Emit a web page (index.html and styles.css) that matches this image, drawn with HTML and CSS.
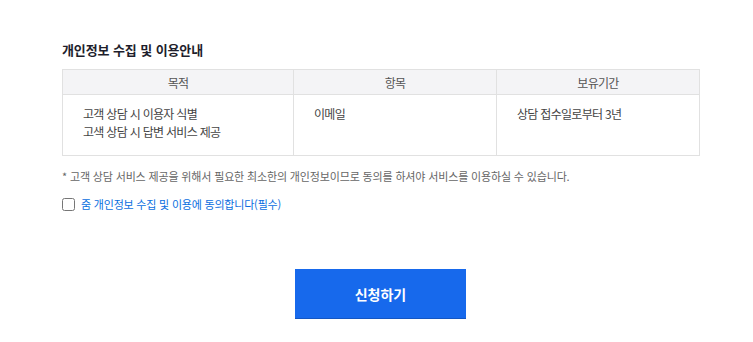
FILE: index.html
```html
<!DOCTYPE html>
<html lang="ko">
<head>
  <meta charset="UTF-8"/>
  <meta name="viewport" content="width=device-width, initial-scale=1.0"/>
  <title>개인정보 수집 및 이용안내</title>
  <link rel="stylesheet" href="styles.css">
</head>
<body>

<div class="container">

  <h3 class="title">개인정보 수집 및 이용안내</h3>

  <table class="privacy">
    <colgroup>
      <col class="col-purpose">
      <col class="col-item">
      <col class="col-period">
    </colgroup>
    <thead>
      <tr>
        <th>목적</th>
        <th>항목</th>
        <th>보유기간</th>
      </tr>
    </thead>
    <tbody>
      <tr>
        <td>고객 상담 시 이용자 식별<br>고색 상담 시 답변 서비스 제공</td>
        <td>이메일</td>
        <td>상담 접수일로부터 3년</td>
      </tr>
    </tbody>
  </table>

  <p class="note">* 고객 상담 서비스 제공을 위해서 필요한 최소한의 개인정보이므로 동의를 하셔야 서비스를 이용하실 수 있습니다.</p>

  <label class="agree">
    <input type="checkbox" id="agreeCheck">
    <span>줌 개인정보 수집 및 이용에 동의합니다(필수)</span>
  </label>

  <div class="actions">
    <button class="submit-btn">신청하기</button>
  </div>

</div>

</body>
</html>
```

FILE: styles.css
```css
* {
  box-sizing: border-box;
}

body {
  font-family: 'Noto Sans CJK KR', 'Noto Sans', sans-serif;
  background: #fff;
  margin: 0;
  padding: 0;
  color: #555;
}

.container {
  width: 637px;
  margin-left: 62px;
  padding-top: 41px;
}

.title {
  font-size: 13px;
  line-height: 18px;
  font-weight: bold;
  color: #1e1e2c;
  letter-spacing: -0.1px;
  margin: 0 0 10px;
}

.privacy {
  width: 637px;
  border-collapse: collapse;
  table-layout: fixed;
  font-size: 12px;
  letter-spacing: -0.7px;
}

.col-purpose {
  width: 231px;
}

.col-item,
.col-period {
  width: 203px;
}

.privacy th,
.privacy td {
  border: 1px solid #e1e1e1;
}

.privacy th {
  height: 25px;
  padding: 0;
  background: #f4f4f6;
  font-weight: normal;
  color: #555;
  text-align: center;
}

.privacy td {
  height: 61px;
  padding: 10px 20px 14px;
  line-height: 18px;
  vertical-align: top;
  color: #444;
}

.note {
  font-size: 11px;
  line-height: 16px;
  color: #666;
  letter-spacing: -0.15px;
  margin: 12px 0 0;
}

.agree {
  display: flex;
  align-items: center;
  margin-top: 12px;
  font-size: 11px;
  color: #0a6ee0;
  letter-spacing: -0.2px;
  cursor: pointer;
}

.agree input {
  width: 13px;
  height: 13px;
  margin: 0 6px 0 0;
}

.actions {
  display: flex;
  justify-content: center;
  margin-top: 57px;
}

.submit-btn {
  width: 171px;
  height: 50px;
  background: #1769ec;
  border: none;
  border-bottom: 1px solid #1456c2;
  color: #fff;
  font-family: inherit;
  font-size: 14px;
  font-weight: bold;
  cursor: pointer;
}
```
